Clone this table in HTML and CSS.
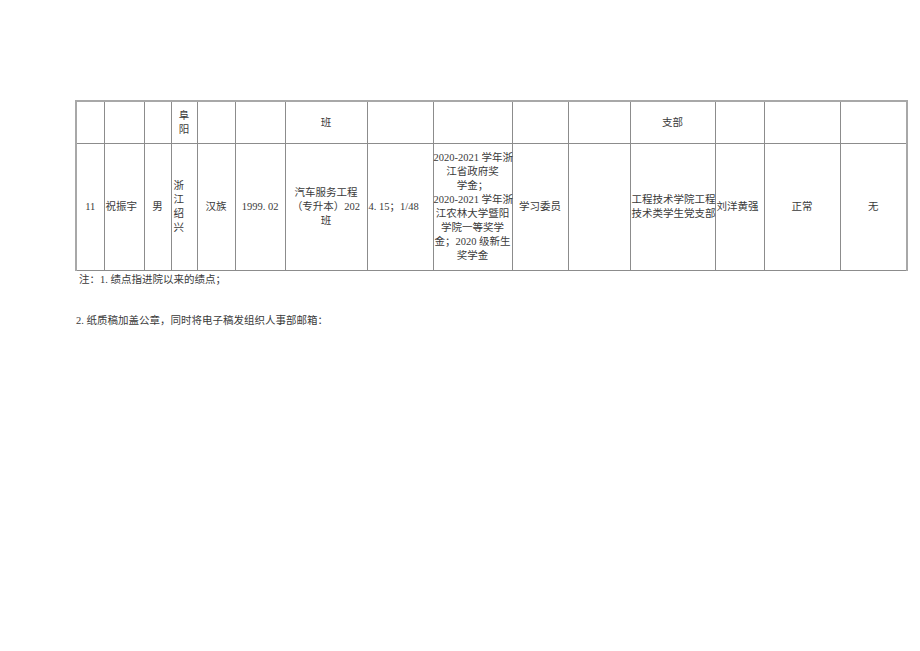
FILE: index.html
```html
<!DOCTYPE html>
<html lang="zh">
<head>
<meta charset="utf-8">
<link rel="stylesheet" href="styles.css">
</head>
<body>
<div class="page">
  <table class="grid">
    <colgroup>
      <col class="w28"><col class="w40"><col class="w27"><col class="w26"><col class="w38">
      <col class="w50"><col class="w82"><col class="w66"><col class="w79"><col class="w56">
      <col class="w62"><col class="w85"><col class="w49"><col class="w76"><col class="w67">
    </colgroup>
    <tr class="head">
      <td></td><td></td><td></td>
      <td class="c">阜<br>阳</td>
      <td></td><td></td>
      <td class="c">班</td>
      <td></td><td></td><td></td><td></td>
      <td class="c">支部</td>
      <td></td><td></td><td></td>
    </tr>
    <tr class="body">
      <td class="c">11</td>
      <td class="l">祝振宇</td>
      <td class="c">男</td>
      <td class="l vert">浙<br>江<br>绍<br>兴</td>
      <td class="c">汉族</td>
      <td class="c">1999. 02</td>
      <td class="c">汽车服务工程<br>（专升本）202<br>班</td>
      <td class="l nw">4. 15；1/48</td>
      <td class="c nw">2020-2021 学年浙<br>江省政府奖<br>学金；<br>2020-2021 学年浙<br>江农林大学暨阳<br>学院一等奖学<br>金；2020 级新生<br>奖学金</td>
      <td class="c">学习委员</td>
      <td></td>
      <td class="l nw">工程技术学院工程<br>技术类学生党支部</td>
      <td class="l nw">刘洋黄强</td>
      <td class="c">正常</td>
      <td class="c">无</td>
    </tr>
  </table>
  <p class="note first">注：1. 绩点指进院以来的绩点；</p>
  <p class="note second">2. 纸质稿加盖公章，同时将电子稿发组织人事部邮箱：</p>
</div>
</body>
</html>
```

FILE: styles.css
```css
html, body {
  margin: 0;
  padding: 0;
  background: #ffffff;
}

.page {
  padding: 100px 0 0 75px;
  font-family: "Liberation Serif", "Noto Sans CJK SC", serif;
  font-size: 10.5px;
  color: #3a3a3a;
}

.grid {
  border-collapse: collapse;
  table-layout: fixed;
  width: 831px;
  border-top: 2px solid #a8a8a8;
  border-left: 2px solid #a8a8a8;
  border-right: 2px solid #a8a8a8;
  border-bottom: 1px solid #4a4a4a;
}

.grid td {
  border: 1px solid #8c8c8c;
  padding: 0;
  line-height: 14px;
  vertical-align: middle;
}

.head td { height: 41px; }
.body td { height: 126px; }

.c { text-align: center; }
.l { text-align: left; padding-left: 1px !important; }
.nw { white-space: nowrap; }
.vert { padding-left: 2px !important; }

.w28 { width: 28px; }
.w40 { width: 40px; }
.w27 { width: 27px; }
.w26 { width: 26px; }
.w38 { width: 38px; }
.w50 { width: 50px; }
.w82 { width: 82px; }
.w66 { width: 66px; }
.w79 { width: 79px; }
.w56 { width: 56px; }
.w62 { width: 62px; }
.w85 { width: 85px; }
.w49 { width: 49px; }
.w76 { width: 76px; }
.w67 { width: 67px; }

.note {
  margin: 0;
  line-height: 14px;
}

.first {
  padding: 2px 0 0 4px;
}

.second {
  padding: 27px 0 0 1px;
}
```
